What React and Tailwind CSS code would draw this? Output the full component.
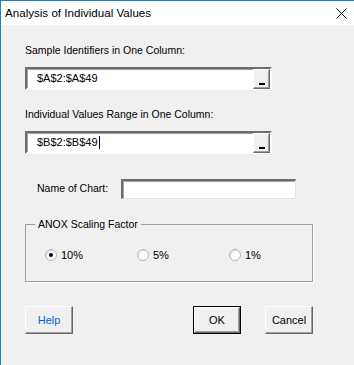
import { useState } from "react";

const font = { fontFamily: '"Liberation Sans", Arial, sans-serif' };

function RangeInput({ value, caret }) {
  return (
    <div className="flex h-[23px] w-[247px] border-t-2 border-l-2 border-t-[#6d6d6d] border-l-[#6d6d6d] border-b-2 border-r-2 border-b-white border-r-white bg-white shadow-[inset_1px_1px_0_#a0a0a0]">
      <div className="flex flex-1 items-center pl-[10px] text-[11px] text-black">
        <span>{value}</span>
        {caret ? <span className="ml-px h-[13px] w-px bg-black" /> : null}
      </div>
      <button
        type="button"
        className="flex h-[20px] w-[17px] items-end justify-center border border-t-white border-l-white border-b-[#696969] border-r-[#696969] bg-[#f0f0f0] pb-[3px] shadow-[inset_-1px_-1px_0_#a0a0a0]"
      >
        <span className="h-[2px] w-[6px] bg-black" />
      </button>
    </div>
  );
}

function Radio({ label, checked, onSelect, className = "" }) {
  return (
    <label className={`flex cursor-default items-center gap-[4px] text-[11px] text-black ${className}`} onClick={onSelect}>
      <span className="flex h-[12px] w-[12px] items-center justify-center rounded-full border border-[#b5b5b5] bg-white shadow-[inset_1px_1px_0_#e0e0e0]">
        {checked ? <span className="h-[4px] w-[4px] rounded-full bg-black" /> : null}
      </span>
      <span>{label}</span>
    </label>
  );
}

function DlgButton({ children, className = "", isDefault = false }) {
  return (
    <button
      type="button"
      className={`h-[28px] w-[48px] text-[11px] ${isDefault ? "border border-black" : ""} ${className}`}
    >
      <span className="flex h-full w-full items-center justify-center border border-t-white border-l-white border-b-[#696969] border-r-[#696969] bg-[#f0f0f0] shadow-[inset_-1px_-1px_0_#a0a0a0]">
        {children}
      </span>
    </button>
  );
}

export default function App() {
  const [factor, setFactor] = useState("10%");

  return (
    <div className="h-[365px] w-[354px] overflow-hidden border-t border-l border-[#1a7fd5] bg-[#f0f0f0]" style={font}>
      <div className="flex h-[24px] items-center justify-between bg-white pl-[4px] pr-[7px]">
        <span className="text-[11.6px] text-black">Analysis of Individual Values</span>
        <svg width="11" height="11" viewBox="0 0 11 11" className="text-black">
          <path d="M0.5 0.5 L10.5 10.5 M10.5 0.5 L0.5 10.5" stroke="currentColor" strokeWidth="1" fill="none" />
        </svg>
      </div>

      <div className="flex flex-col pl-[24px]">
        <p className="mt-[19px] text-[10.5px] leading-[12px] text-black">Sample Identifiers in One Column:</p>
        <div className="mt-[11px]">
          <RangeInput value="$A$2:$A$49" />
        </div>

        <p className="mt-[18px] text-[10.5px] leading-[12px] text-black">Individual Values Range in One Column:</p>
        <div className="mt-[11px]">
          <RangeInput value="$B$2:$B$49" caret />
        </div>

        <div className="mt-[25px] flex items-center pl-[12px]">
          <span className="w-[84px] text-[10.5px] text-black">Name of Chart:</span>
          <div className="h-[20px] w-[175px] border-t-2 border-l-2 border-t-[#6d6d6d] border-l-[#6d6d6d] border-b border-r border-b-[#e3e3e3] border-r-[#e3e3e3] bg-white shadow-[inset_1px_1px_0_#a0a0a0]" />
        </div>

        <fieldset className="mt-[19px] h-[64px] w-[288px] min-w-0 border border-[#a0a0a0] shadow-[1px_1px_0_white]">
          <legend className="ml-[9px] px-[3px] text-[10.5px] leading-[13px] text-black">ANOX Scaling Factor</legend>
          <div className="flex pl-[19px] pt-[16px]">
            {["10%", "5%", "1%"].map((f, i) => (
              <Radio
                key={f}
                label={f}
                checked={factor === f}
                onSelect={() => setFactor(f)}
                className={i < 2 ? "w-[92px]" : ""}
              />
            ))}
          </div>
        </fieldset>

        <div className="mt-[24px] flex">
          <DlgButton className="text-[#0066cc]">Help</DlgButton>
          <DlgButton isDefault className="ml-[120px] text-black">OK</DlgButton>
          <DlgButton className="ml-[24px] text-black">Cancel</DlgButton>
        </div>
      </div>
    </div>
  );
}
